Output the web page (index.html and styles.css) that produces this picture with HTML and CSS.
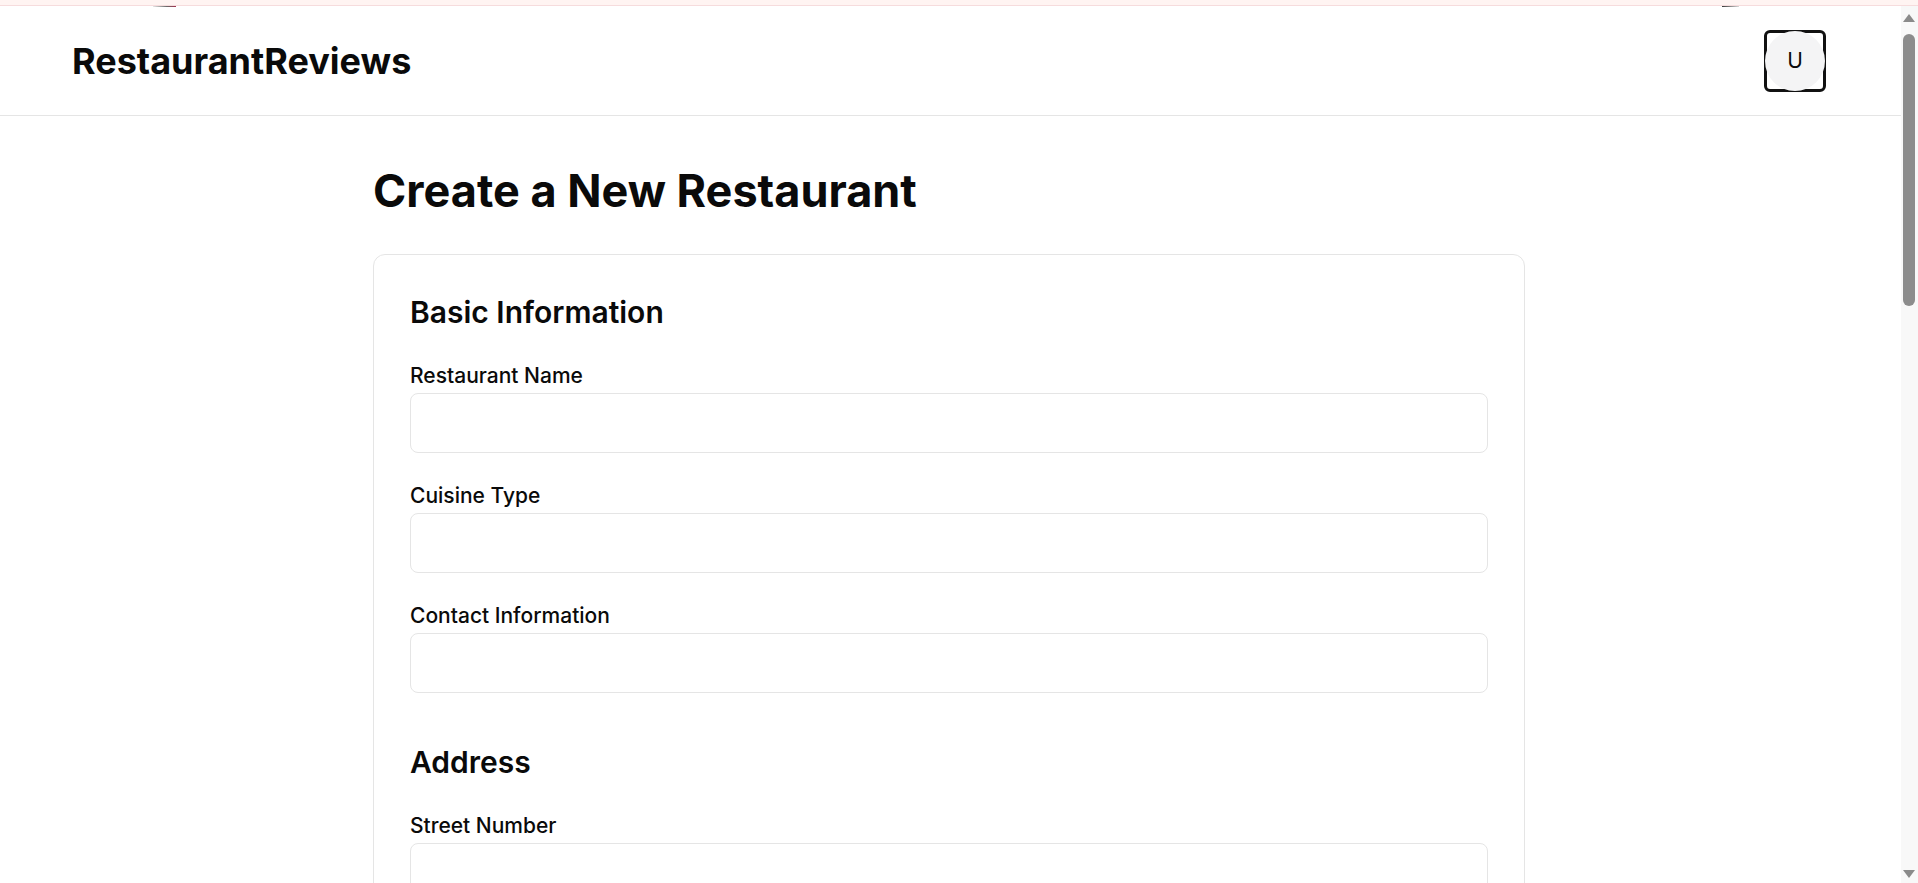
FILE: index.html
```html
<!DOCTYPE html>
<html lang="en">
<head>
<meta charset="utf-8">
<title>Create a New Restaurant</title>
<link rel="stylesheet" href="styles.css">
</head>
<body>
<div class="top-strip"></div>
<div class="viewport">
  <div class="page">
    <header class="site-header">
      <span class="mark mark-left"></span>
      <span class="mark mark-right"></span>
      <a class="logo" href="#">RestaurantReviews</a>
      <button class="avatar-btn" type="button"><span class="avatar">U</span></button>
    </header>
    <main class="main">
      <h1 class="page-title">Create a New Restaurant</h1>
      <form class="card">
        <section class="section">
          <h2 class="section-title">Basic Information</h2>
          <div class="field"><label for="name">Restaurant Name</label><input id="name" type="text"></div>
          <div class="field"><label for="cuisine">Cuisine Type</label><input id="cuisine" type="text"></div>
          <div class="field"><label for="contact">Contact Information</label><input id="contact" type="text"></div>
        </section>
        <section class="section">
          <h2 class="section-title">Address</h2>
          <div class="field"><label for="street-number">Street Number</label><input id="street-number" type="text"></div>
        </section>
      </form>
    </main>
  </div>
  <div class="scrollbar">
    <span class="sb-arrow sb-up"></span>
    <span class="sb-thumb"></span>
    <span class="sb-space"></span>
    <span class="sb-arrow sb-down"></span>
  </div>
</div>
</body>
</html>
```

FILE: styles.css
```css
html, body {
  margin: 0;
  padding: 0;
  height: 100%;
  overflow: hidden;
}

body {
  font-family: Inter, "Noto Sans", "Liberation Sans", sans-serif;
  color: #0a0a0a;
  background: #ffffff;
}

.top-strip {
  height: 5px;
  background: #fff4f2;
  border-bottom: 1px solid #f6dcdd;
}

.viewport {
  display: flex;
  height: calc(100vh - 6px);
}

.page {
  flex: 1;
  min-width: 0;
  overflow: hidden;
}

.site-header {
  position: relative;
  height: 109px;
  border-bottom: 1px solid #e5e5e5;
  display: flex;
  align-items: center;
  justify-content: space-between;
  padding: 0 75px 0 72px;
}

.mark {
  position: absolute;
  top: 0;
  height: 1px;
}

.mark-left {
  left: 153px;
  width: 23px;
  background: linear-gradient(90deg, #e6e6e6, #6a6a6a 60%, #a3324f);
}

.mark-right {
  left: 1722px;
  width: 17px;
  background: linear-gradient(90deg, #3a3a3a, #d8d8d8);
}

.logo {
  font-size: 36px;
  font-weight: 700;
  color: #0a0a0a;
  text-decoration: none;
}

.avatar-btn {
  width: 62px;
  height: 62px;
  box-sizing: border-box;
  border: 3px solid #111111;
  border-radius: 6px;
  background: #ffffff;
  padding: 0;
  display: flex;
  align-items: center;
  justify-content: center;
  font: inherit;
  cursor: pointer;
}

.avatar {
  flex: none;
  width: 60px;
  height: 60px;
  border-radius: 50%;
  background: #f4f4f5;
  display: flex;
  align-items: center;
  justify-content: center;
  font-family: Inter, "Noto Sans", sans-serif;
  font-size: 21px;
  font-weight: 400;
  color: #0a0a0a;
}

.main {
  box-sizing: border-box;
  max-width: 1155px;
  margin: 0 auto;
  padding: 49px 3px 0 0;
}

.page-title {
  margin: 0 0 37px;
  font-size: 45px;
  line-height: 52px;
  font-weight: 700;
}

.card {
  border: 1px solid #e5e5e5;
  border-radius: 12px;
  padding: 36px;
  display: flex;
  flex-direction: column;
  gap: 48px;
}

.section {
  display: flex;
  flex-direction: column;
  gap: 28px;
}

.section-title {
  margin: 0 0 1px;
  padding-top: 1px;
  font-size: 30px;
  line-height: 40px;
  font-weight: 600;
}

.field {
  display: flex;
  flex-direction: column;
  gap: 3px;
}

.field label {
  padding-top: 1px;
  font-size: 21px;
  line-height: 28px;
  font-weight: 500;
}

.field input {
  height: 60px;
  box-sizing: border-box;
  border: 1px solid #e5e5e5;
  border-radius: 8px;
  padding: 0 16px;
  font: inherit;
  font-size: 20px;
  background: #ffffff;
  outline: none;
}

.scrollbar {
  flex: none;
  width: 17px;
  background: #f8f8f8;
  display: flex;
  flex-direction: column;
  align-items: center;
  padding: 8px 2px 5px 0;
  box-sizing: border-box;
}

.sb-arrow {
  width: 0;
  height: 0;
  border-left: 6px solid transparent;
  border-right: 6px solid transparent;
}

.sb-up {
  border-bottom: 8px solid #8a8a8a;
}

.sb-down {
  border-top: 8px solid #8a8a8a;
}

.sb-thumb {
  margin-top: 12px;
  width: 12px;
  height: 272px;
  border-radius: 6px;
  background: #8c8c8c;
}

.sb-space {
  flex: 1;
}
```
